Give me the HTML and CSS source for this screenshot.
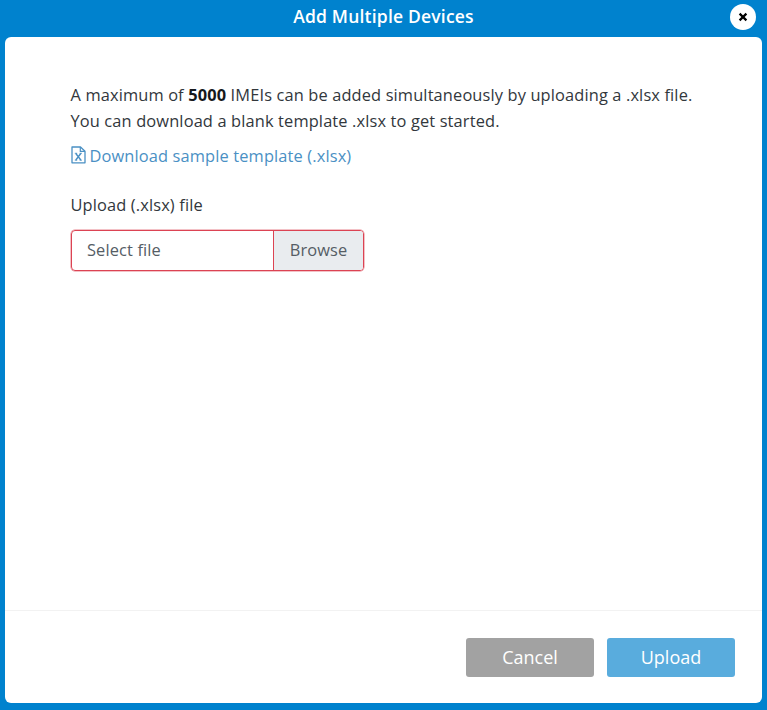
FILE: index.html
```html
<!DOCTYPE html>
<html lang="en">
<head>
<meta charset="utf-8">
<title>Add Multiple Devices</title>
<link rel="stylesheet" href="styles.css">
</head>
<body>
<div class="modal">
  <header class="header">
    <h1 class="title">Add Multiple Devices</h1>
    <button class="close" aria-label="Close"><svg width="10" height="10" viewBox="0 0 10 10"><path d="M1.6 1.6 8.4 8.4M8.4 1.6 1.6 8.4" stroke="#000" stroke-width="2.2"/></svg></button>
  </header>
  <main class="panel">
    <section class="content">
      <p class="intro">A maximum of <b>5000</b> IMEIs can be added simultaneously by uploading a .xlsx file.<br>You can download a blank template .xlsx to get started.</p>
      <a class="download"><svg class="file-icon" width="15" height="18" viewBox="0 0 15 18" fill="none" stroke="currentColor"><path d="M1 1H9.5L14 5.2V16.8H1Z" stroke-width="1.3" stroke-linejoin="round"/><path d="M9.3 1V5.4H14" stroke-width="1.2"/><path d="M4.8 7.5 9.8 14M9.8 7.5 4.8 14" stroke-width="1.4"/><path d="M3.8 7.3H6.2M8.6 7.3H10.9M3.8 14.2H6.2M8.6 14.2H10.9" stroke-width=".9"/></svg><span>Download sample template (.xlsx)</span></a>
      <div class="label">Upload (.xlsx) file</div>
      <div class="picker"><span class="filename">Select file</span><span class="browse">Browse</span></div>
    </section>
    <footer class="footer">
      <button class="button cancel">Cancel</button>
      <button class="button upload">Upload</button>
    </footer>
  </main>
</div>
</body>
</html>
```
FILE: styles.css
```css
* { box-sizing: border-box; }
body { margin: 0; font-family: "Open Sans", "Noto Sans", sans-serif; font-size: 16.4px; letter-spacing: .135px; color: #32373c; }
button { font: inherit; border: 0; padding: 0; }
.modal { height: 710px; padding: 0 5px 7px; background: #0082ce; display: flex; flex-direction: column; }
.header { height: 37px; flex: none; display: grid; grid-template-columns: 1fr auto 1fr; padding: 0 6px; }
.title { grid-column: 2; margin: 0; font-size: 17.5px; letter-spacing: .2px; line-height: 32px; font-weight: 600; color: #fff; }
.close { grid-column: 3; justify-self: end; width: 26px; height: 26px; margin-top: 4px; border-radius: 50%; background: #fff; display: flex; align-items: center; justify-content: center; }
.panel { flex: 1; background: #fff; border-radius: 6px; display: flex; flex-direction: column; }
.content { flex: 1; padding: 45px 65px 0 65.5px; }
.intro { margin: 0; line-height: 25.5px; white-space: nowrap; }
.intro b { color: #16191c; }
.download { display: flex; align-items: center; height: 24px; margin-top: 10px; color: #4a90c4; white-space: nowrap; }
.file-icon { margin-right: 4px; }
.label { margin-top: 26px; height: 24px; line-height: 24px; }
.picker { display: flex; width: 293px; height: 41px; margin: 13px 0 0 .5px; border: 1px solid #dc4353; box-shadow: 0 0 0 .5px #e8838d; border-radius: 4px; overflow: hidden; color: #555d65; line-height: 37px; }
.filename { flex: 1; padding-left: 15px; }
.browse { width: 90px; text-align: center; background: #e9ecef; border-left: 1px solid #dc4353; }
.footer { height: 93px; flex: none; border-top: 1px solid #f2f2f2; display: flex; justify-content: flex-end; gap: 13px; padding: 27px 27px 0 0; }
.button { width: 128px; height: 39px; border-radius: 3px; color: #fff; font-size: 18px; line-height: 37px; padding-bottom: 1px; letter-spacing: 0; }
.cancel { background: #a2a2a2; }
.upload { background: #59acdd; }
```
